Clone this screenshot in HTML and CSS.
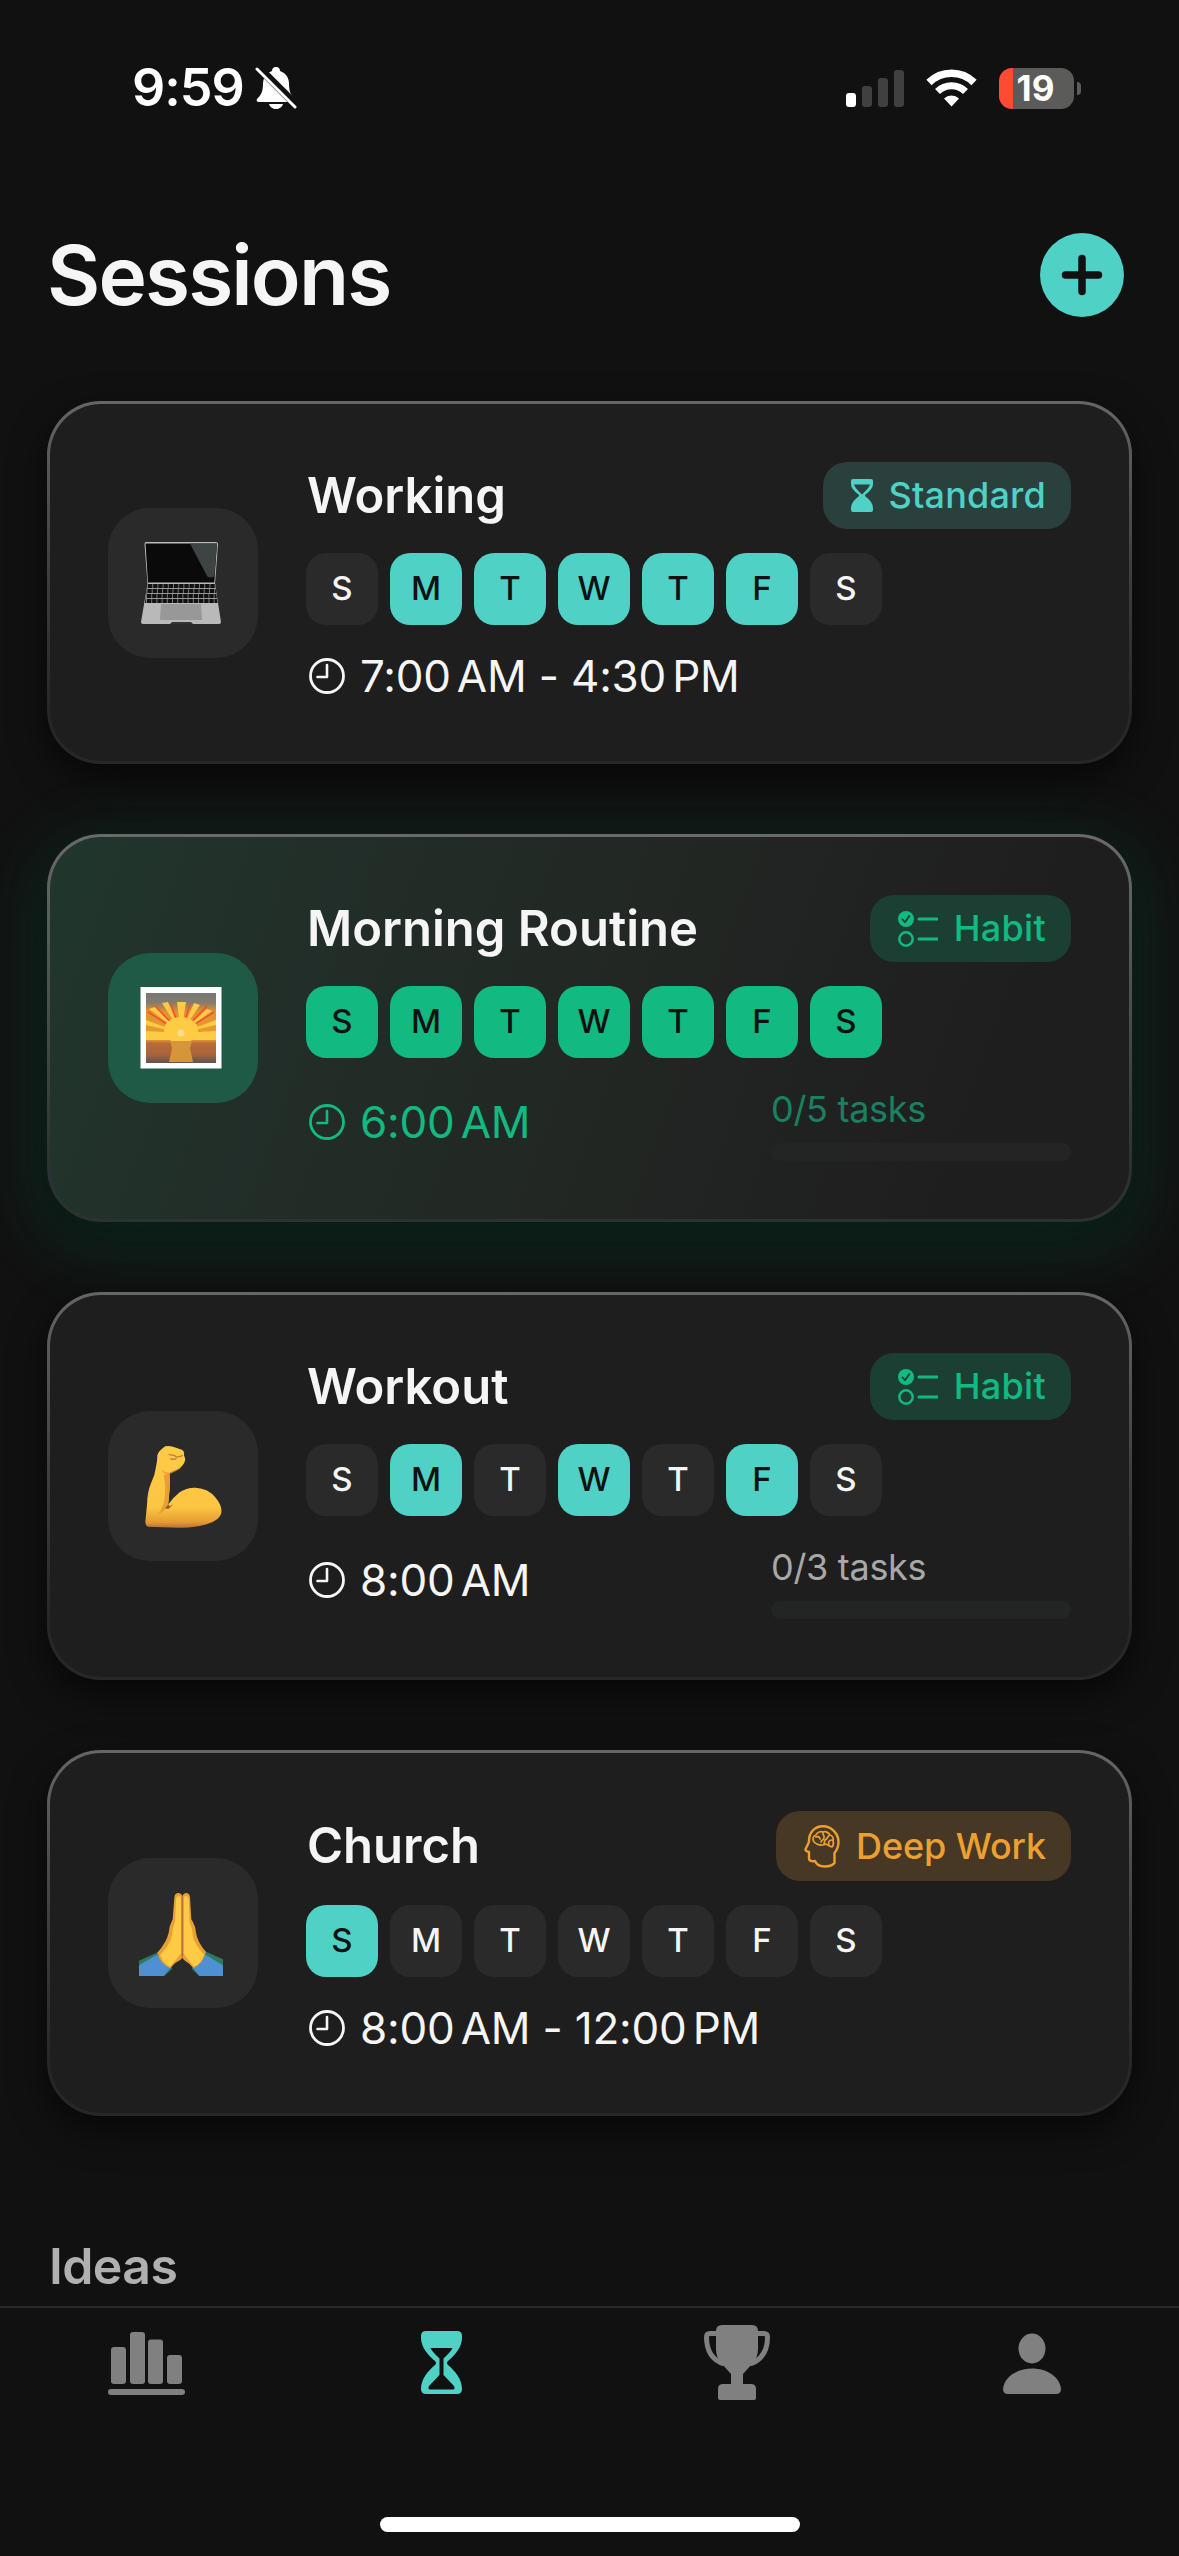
FILE: index.html
```html
<!DOCTYPE html>
<html lang="en">

<head>
    <meta charset="UTF-8">
    <meta name="viewport" content="width=device-width, initial-scale=1.0">
    <title>Sessions</title>
    <link rel="stylesheet" href="styles.css">
</head>

<body>
    <!-- shared icons -->
    <svg class="defs" width="0" height="0">
        <symbol id="clock" viewBox="0 0 36 36">
            <circle cx="18" cy="18" r="16.500" fill="none" stroke="currentColor" stroke-width="2.800" />
            <path d="M18 7v12H8.500" fill="none" stroke="currentColor" stroke-width="2.600" stroke-linecap="round" stroke-linejoin="round" />
        </symbol>
        <symbol id="checklist" viewBox="0 0 40 36">
            <circle cx="8" cy="8" r="8" fill="currentColor" />
            <path d="M4.500 8.500l2.500 2.700 4.300-6.200" fill="none" stroke="#1c3f33" stroke-width="1.800" stroke-linecap="round" stroke-linejoin="round" />
            <circle cx="8" cy="28" r="6.700" fill="none" stroke="currentColor" stroke-width="2.500" />
            <path d="M21 8h18M21 28h18" stroke="currentColor" stroke-width="3" stroke-linecap="round" />
        </symbol>
    </svg>

    <div class="status-bar">
        <div class="status-left">
            <span class="status-time">9:59</span>
            <svg class="bell" viewBox="0 0 42 44">
                <path d="M21 1c-3 0-4 2-4 4-6 2-9 7-9 13 0 9-3 12-6 15-1 2 0 3 2 3h34c2 0 3-1 2-3-3-3-6-6-6-15 0-6-3-11-9-13 0-2-1-4-4-4z" fill="#fff" />
                <path d="M14 38h14c-1 3.500-4 5-7 5s-6-1.500-7-5z" fill="#fff" />
                <path d="M3 1l39 39" stroke="#111" stroke-width="8" />
                <path d="M2 3l38 38" stroke="#fff" stroke-width="3" stroke-linecap="round" />
            </svg>
        </div>
        <div class="status-right">
            <svg class="signal" viewBox="0 0 58 37">
                <rect x="0" y="23" width="10" height="14" rx="3" fill="#fff" />
                <rect x="16" y="16" width="10" height="21" rx="3" fill="#404040" />
                <rect x="32" y="8" width="10" height="29" rx="3" fill="#404040" />
                <rect x="48" y="0" width="10" height="37" rx="3" fill="#404040" />
            </svg>
            <svg class="wifi" viewBox="0 0 51 38">
                <path d="M3 13.500a32 32 0 0 1 45 0" fill="none" stroke="#fff" stroke-width="7.500" />
                <path d="M11.500 22.500a20 20 0 0 1 28 0" fill="none" stroke="#fff" stroke-width="7" />
                <path d="M25.500 37.500l-7.500-8a11 11 0 0 1 15 0z" fill="#fff" />
            </svg>
            <div class="battery">19</div>
            <div class="battery-tip"></div>
        </div>
    </div>

    <header class="header">
        <h1>Sessions</h1>
        <button class="add-btn">
            <svg viewBox="0 0 84 84">
                <path d="M42 25.500v33M25.500 42h33" stroke="#111" stroke-width="7.500" stroke-linecap="round" />
            </svg>
        </button>
    </header>

    <main class="sessions">
        <div class="card">
            <div class="emoji">
                <svg viewBox="0 0 150 150">
                    <path d="M38 34h70q2 0 2 2l-3 40H39.500L36.500 36q0-2 1.500-2z" fill="#b8bcbc" />
                    <path d="M37.500 35.500h71.500l-2.700 39H40z" fill="#0a0a0a" />
                    <path d="M82 35.500h27l-2.700 33q-4 2-7 0z" fill="#3e4343" />
                    <path d="M39.500 76h67.500l6 38q0 2-2 2H35q-2 0-2-2z" fill="#b9b9b9" />
                    <path d="M39.500 76h67.500l2.500 19h-72.500z" fill="#111" />
                    <path d="M39 80.500h69M38.500 85.500h70M38 90.500h71" stroke="#999" stroke-width="1.200" />
                    <path d="M39 78h69M38.500 83h70M38 88h71M38 93h71" stroke="#777" stroke-width="4" stroke-dasharray="1 4.200" />
                    <path d="M53 96h40l1 16H52z" fill="#989898" />
                    <path d="M64 114h19l2 2H62z" fill="#333" />
                </svg>
            </div>
            <div class="info">
                <div class="title-row">
                    <h2>Working</h2>
                    <div class="badge standard">
                        <svg class="badge-hourglass" viewBox="0 0 22 33">
                            <path fill-rule="evenodd" fill="currentColor" d="M2 0h18q2 0 2 2v3q0 5-7.500 10.500-1 1 0 2Q22 23 22 29v2q0 2-2 2H2q-2 0-2-2v-2q0-6 7.500-11.500 1-1 0-2Q0 10 0 5V2Q0 0 2 0zM3 5.500q1 3.500 8 10 7-6.500 8-10z" />
                        </svg>
                        <span>Standard</span>
                    </div>
                </div>
                <div class="days">
                    <span>S</span><span class="on">M</span><span class="on">T</span><span class="on">W</span><span class="on">T</span><span class="on">F</span><span>S</span>
                </div>
                <div class="time-row">
                    <div class="time"><svg><use href="#clock" /></svg><span>7:00<i></i>AM - 4:30<i></i>PM</span></div>
                </div>
            </div>
        </div>

        <div class="card active">
            <div class="emoji">
                <svg viewBox="0 0 150 150">
                    <defs>
                        <linearGradient id="sky" x1="0" y1="0" x2="0" y2="1">
                            <stop offset="0" stop-color="#777" />
                            <stop offset=".14" stop-color="#857b6d" />
                            <stop offset=".26" stop-color="#e2902f" />
                            <stop offset=".66" stop-color="#ea9f33" />
                            <stop offset=".72" stop-color="#b96a3a" />
                            <stop offset=".88" stop-color="#a86339" />
                            <stop offset="1" stop-color="#5d5550" />
                        </linearGradient>
                    </defs>
                    <rect x="32.500" y="34" width="81" height="81.500" fill="#fff" />
                    <rect x="38" y="40" width="70" height="70" fill="url(#sky)" />
                    <path d="M73 80L38 67v5zM73 80L41 56l6-2zM73 80L54 50l6-1zM73 80L69 49h9zM73 80L86 50l6 2zM73 80l26-24 5 2zM73 80l35-13v5zM73 80l-35-2v9h70v-9z" fill="#fecb45" />
                    <path d="M73 80L40 59M73 80L47 53M73 80L63 51M73 80L82 51M73 80L99 53M73 80l33-21" stroke="#f4502f" stroke-width="1.500" />
                    <ellipse cx="73" cy="77" rx="17" ry="13" fill="#fecb45" />
                    <path d="M62 88h22l-2 7 3 14H61l3-14z" fill="#d6953a" />
                    <circle cx="73" cy="80" r="3.500" fill="#f7dc9a" />
                </svg>
            </div>
            <div class="info">
                <div class="title-row">
                    <h2>Morning Routine</h2>
                    <div class="badge habit">
                        <svg class="badge-list"><use href="#checklist" /></svg>
                        <span>Habit</span>
                    </div>
                </div>
                <div class="days">
                    <span class="on">S</span><span class="on">M</span><span class="on">T</span><span class="on">W</span><span class="on">T</span><span class="on">F</span><span class="on">S</span>
                </div>
                <div class="time-row">
                    <div class="time"><svg><use href="#clock" /></svg><span>6:00<i></i>AM</span></div>
                    <div class="tasks">
                        <span>0/5 tasks</span>
                        <div class="bar"></div>
                    </div>
                </div>
            </div>
        </div>

        <div class="card">
            <div class="emoji">
                <svg viewBox="24 33 450 450">
                    <defs>
                        <linearGradient id="arm" x1="0" y1="0" x2="0" y2="1">
                            <stop offset="0" stop-color="#ffcb45" />
                            <stop offset=".75" stop-color="#fcc544" />
                            <stop offset=".93" stop-color="#e59c31" />
                            <stop offset="1" stop-color="#b8703a" />
                        </linearGradient>
                    </defs>
                    <path d="M196 139q10-3 22 1 22 6 30 11 6 4 4 16 6 8 2 18-6 16-24 24l-22 10q2 26 0 50-2 24-3 44 14-20 34-36 20-15 48-14 38 2 60 30 20 24 17 46-4 22-44 34-40 12-86 10l-90-3q-8-2-8-14l5-52q1-38 12-64 12-24 15-50 4-14 4-34 4-14 24-27z" fill="url(#arm)" />
                    <path d="M209 222q2 26 0 48-2 24-5 42-8 24-30 30 18-22 20-50 4-30-3-68z" fill="#e9a033" />
                    <path d="M205 312q-5 8-10 13l10 2 14-14-11 6z" fill="#8f5a2e" />
                    <path d="M184 208q10 12 26 10 20-6 38-24-8 14-22 20l-18 8q-16 4-24-14z" fill="#e9a033" />
                    <path d="M206 164q16 0 22 6 12 2 20-4M210 176q10 4 20-1" fill="none" stroke="#c17c35" stroke-width="4" />
                </svg>
            </div>
            <div class="info">
                <div class="title-row">
                    <h2>Workout</h2>
                    <div class="badge habit">
                        <svg class="badge-list"><use href="#checklist" /></svg>
                        <span>Habit</span>
                    </div>
                </div>
                <div class="days">
                    <span>S</span><span class="on">M</span><span>T</span><span class="on">W</span><span>T</span><span class="on">F</span><span>S</span>
                </div>
                <div class="time-row">
                    <div class="time"><svg><use href="#clock" /></svg><span>8:00<i></i>AM</span></div>
                    <div class="tasks">
                        <span>0/3 tasks</span>
                        <div class="bar"></div>
                    </div>
                </div>
            </div>
        </div>

        <div class="card">
            <div class="emoji">
                <svg viewBox="24 54 450 450">
                    <path d="M117 362l58-26 42 50-24 22h-76z" fill="#2c7a5f" />
                    <path d="M117 376l54-32 40 40-20 24h-74z" fill="#4f90d2" />
                    <path d="M369 358l-54-24-40 52 22 22h72z" fill="#2c7a5f" />
                    <path d="M369 376l-52-32-38 40 20 24h70z" fill="#4f90d2" />
                    <path d="M247 168q-4-10-14-9-9 1-10 14l-5 65q-10 18-12 40-6 28-34 60 8 34 40 47 10-16 24-22 8-4 11-10z" fill="#e9a033" />
                    <path d="M247 168q4-10 13-9 9 1 10 14l4 65q12 18 14 40 4 28 30 58-8 34-38 49-12-16-24-22-6-4-9-10z" fill="#e9a033" />
                    <path d="M243 172q-10-10-15 4l-3 70q-8 20-9 40-4 26-36 60 10 24 30 34 22-24 33-40z" fill="#ffcb45" />
                    <path d="M251 172q10-10 15 4l3 70q8 20 9 40 4 26 34 58-8 26-30 36-22-24-31-40z" fill="#ffcb45" />
                    <path d="M247 170v180" stroke="#b8703a" stroke-width="5" />
                </svg>
            </div>
            <div class="info">
                <div class="title-row">
                    <h2>Church</h2>
                    <div class="badge deep">
                        <svg class="badge-head" viewBox="0 0 36 43" fill="none" stroke="currentColor" stroke-linejoin="round" stroke-linecap="round">
                            <path stroke-width="2.400" d="M5 16C5 7 11 1.300 19 1.300S34.500 8 34.500 17c0 5-1.500 8-4 11v10c-2 2.500-6 3.500-10 3.500-5 0-8-2-9.500-5.500-3 .500-6 0-6-2.500v-6.500C3 26.500 1.300 26 1.500 24.500 2 22 5 19 5 16z" />
                            <path stroke-width="1.700" d="M10 17c-2-3-1-6 2-7 1-3 5-4 7-3 3-1 6 1 7 3 3 1 4 4 3 6 1 3 0 5-1 6-3-1-4-2-6-3-4 2-9 1-12-2zM12 12c2-1 4 0 4 2M19 7c-1 3 2 3 1 6s-3 2-3 4M26 10c-3 1-2 4-5 5l-1 4M28 15c-3 0-4 2-3 4" />
                        </svg>
                        <span>Deep Work</span>
                    </div>
                </div>
                <div class="days">
                    <span class="on">S</span><span>M</span><span>T</span><span>W</span><span>T</span><span>F</span><span>S</span>
                </div>
                <div class="time-row">
                    <div class="time"><svg><use href="#clock" /></svg><span>8:00<i></i>AM - 12:00<i></i>PM</span></div>
                </div>
            </div>
        </div>

        <h3>Ideas</h3>
    </main>

    <nav class="tab-bar">
        <div class="tabs">
            <div class="tab">
                <svg width="78" height="76" viewBox="108 2325 78 76" fill="#808080">
                    <rect x="111" y="2347" width="15" height="37" rx="3" />
                    <rect x="130" y="2332" width="15" height="52" rx="3" />
                    <rect x="148" y="2339.500" width="15" height="44.500" rx="3" />
                    <rect x="167" y="2355" width="15" height="29" rx="3" />
                    <rect x="108" y="2389" width="77" height="6" rx="3" />
                </svg>
            </div>
            <div class="tab">
                <svg width="42" height="76" viewBox="0 -6 42 76" fill="#4fd1c5">
                    <path fill-rule="evenodd" d="M5 0h31q5 0 5 5v2c0 9-7 17-14 23q-2 2 0 4c7 6 14 14 14 24q0 5-5 5H5q-5 0-5-5C0 48 7 40 14 34q2-2 0-4C7 24 0 16 0 7V5Q0 0 5 0zM9.500 17q1 3 9 10.500v16.500L8 55q-1.500 3.500 1 3.500h23q2.500 0 1-3.500L22.500 44V27.500q8-7.500 9-10.500z" />
                </svg>
            </div>
            <div class="tab">
                <svg width="66" height="76" viewBox="0 0 66 76" fill="#808080">
                    <path d="M18 0h30q6 0 6 6v18q0 9-6 15l-9 10v10h8q5 0 5 5v9q0 2-2 2H16q-2 0-2-2v-9q0-5 5-5h8V49l-9-10q-6-6-6-15V6q0-6 6-6z" />
                    <path d="M13 8.500H6q-3.500 0-3.500 3.500C2.500 26 8 35 20 39M53 8.500h7q3.500 0 3.500 3.500C63.500 26 58 35 46 39" fill="none" stroke="#808080" stroke-width="5" />
                </svg>
            </div>
            <div class="tab">
                <svg width="58" height="76" viewBox="0 -8 58 76" fill="#808080">
                    <ellipse cx="29" cy="15.500" rx="13.500" ry="15" />
                    <path d="M5 61q-5 0-5-5C1 44 14 35.500 29 35.500S57 44 58 56q0 5-5 5z" />
                </svg>
            </div>
        </div>
        <div class="home-indicator"></div>
    </nav>
</body>

</html>
```
FILE: styles.css
```css
* {
    box-sizing: border-box;
}

body {
    margin: 0;
    width: 1179px;
    height: 2556px;
    overflow: hidden;
    display: flex;
    flex-direction: column;
    background-color: #111;
    color: #f5f5f5;
    font-family: Inter, "Liberation Sans", sans-serif;
}

h1,
h2,
h3 {
    margin: 0;
}

svg {
    display: block;
    flex: none;
}

.defs {
    position: absolute;
}

.status-bar {
    flex: none;
    height: 176px;
    padding: 0 98px 0 132px;
    display: flex;
    justify-content: space-between;
    align-items: center;
    color: #fff;
}

.status-left,
.status-right {
    display: flex;
    align-items: center;
}

.status-time {
    font-size: 52px;
    font-weight: 600;
    line-height: 60px;
    width: 123px;
    letter-spacing: -1px;
}

.bell {
    width: 42px;
    height: 44px;
}

.signal {
    width: 58px;
    height: 37px;
    margin-right: 22px;
}

.wifi {
    width: 51px;
    height: 38px;
    margin-right: 22px;
}

.battery {
    width: 75px;
    height: 41px;
    padding-right: 2px;
    border-radius: 13px;
    background: linear-gradient(90deg, #ff4a35 14px, #5b5b59 14px);
    font-size: 35px;
    font-weight: 700;
    line-height: 40px;
    text-align: center;
}

.battery-tip {
    width: 4px;
    height: 13px;
    margin-left: 3px;
    border-radius: 0 4px 4px 0;
    background-color: #5b5b59;
}

.header {
    flex: none;
    height: 198px;
    padding: 0 55px 0 47px;
    display: flex;
    justify-content: space-between;
    align-items: center;
}

.header h1 {
    padding-top: 2px;
    font-size: 82px;
    font-weight: 600;
    line-height: 100px;
    letter-spacing: -1.9px;
}

.add-btn {
    width: 84px;
    height: 84px;
    padding: 0;
    border: none;
    border-radius: 50%;
    background-color: #4fd1c5;
}

.sessions {
    flex: 1;
    min-height: 0;
    padding: 27px 47px 0;
    display: flex;
    flex-direction: column;
    gap: 70px;
}

.card {
    flex: none;
    display: flex;
    align-items: center;
    gap: 48px;
    padding: 58px;
    border: 3px solid transparent;
    border-radius: 54px;
    background: linear-gradient(#1e1e1e, #1e1e1e) padding-box,
        linear-gradient(#666, #404040 45%, #272727 85%) border-box;
    box-shadow: 0 14px 36px rgba(0, 0, 0, 0.6);
}

.card.active {
    background: linear-gradient(110deg, #20372c, #22302a 18%, #222623 55%, #1e1e1e 85%) padding-box,
        linear-gradient(#6a6a6a, #484f4c 45%, #2b3231 85%) border-box;
    box-shadow: 0 16px 64px 18px rgba(16, 185, 129, 0.13), 0 12px 30px 6px rgba(0, 0, 0, 0.35);
}

.emoji {
    flex: none;
    width: 150px;
    height: 150px;
    border-radius: 42px;
    background-color: #2a2a2a;
}

.card.active .emoji {
    background-color: #1e5a45;
}

.info {
    flex: 1;
    display: flex;
    flex-direction: column;
    gap: 24px;
}

.title-row {
    display: flex;
    justify-content: space-between;
    align-items: center;
}

.title-row h2 {
    padding-left: 1px;
    font-size: 49px;
    font-weight: 600;
    line-height: 60px;
}

.badge {
    height: 67px;
    padding: 0 25px 0 28px;
    display: flex;
    align-items: center;
    gap: 15px;
    border-radius: 24px;
    font-size: 36px;
    font-weight: 500;
}

.badge span {
    padding-bottom: 1px;
}

.badge.standard {
    letter-spacing: 0.2px;
    color: #4fd1c5;
    background-color: #2a403d;
}

.badge.habit {
    gap: 16px;
    letter-spacing: 0.3px;
    color: #12b981;
    background-color: #1c3f33;
}

.badge.deep {
    height: 70px;
    gap: 16px;
    letter-spacing: -0.1px;
    color: #eda032;
    background-color: #463824;
}

.badge-hourglass {
    width: 22px;
    height: 33px;
}

.badge-list {
    width: 40px;
    height: 36px;
}

.badge-head {
    width: 36px;
    height: 43px;
}

.days {
    display: flex;
    gap: 12px;
}

.days span {
    width: 72px;
    height: 72px;
    border-radius: 20px;
    background-color: #2a2a2a;
    font-size: 33px;
    font-weight: 500;
    line-height: 71px;
    text-align: center;
}

.days .on {
    background-color: #4fd1c5;
    color: #111;
}

.active .days .on {
    background-color: #12b981;
}

.time-row {
    display: flex;
    justify-content: space-between;
    align-items: center;
    min-height: 54px;
}

.time {
    display: flex;
    align-items: center;
    gap: 15px;
    padding-left: 3px;
    font-size: 44px;
    line-height: 54px;
    letter-spacing: -0.2px;
}

.time svg {
    width: 36px;
    height: 36px;
}

.time i {
    display: inline-block;
    width: 6px;
}

.active .time {
    color: #12b981;
}

.tasks {
    width: 300px;
    padding-top: 6px;
    font-size: 36px;
    line-height: 43px;
    letter-spacing: -0.3px;
    color: #a8a8a8;
}

.active .tasks {
    color: #1a8062;
}

.tasks span {
    display: block;
}

.bar {
    height: 18px;
    margin-top: 12px;
    border-radius: 9px;
    background-color: #232424;
}

.sessions h3 {
    margin-top: 50px;
    padding-left: 2px;
    font-size: 50px;
    font-weight: 600;
    line-height: 60px;
    letter-spacing: -0.6px;
    color: #b0b0b0;
}

.tab-bar {
    flex: none;
    height: 250px;
    border-top: 2px solid #252a29;
    background-color: #111;
    display: flex;
    flex-direction: column;
    align-items: center;
    justify-content: space-between;
    padding: 17px 0 24px;
    z-index: 1;
}

.tabs {
    width: 100%;
    display: flex;
}

.tab {
    flex: 1;
    display: flex;
    justify-content: center;
}

.home-indicator {
    width: 420px;
    height: 15px;
    border-radius: 8px;
    background-color: #fff;
}
```
